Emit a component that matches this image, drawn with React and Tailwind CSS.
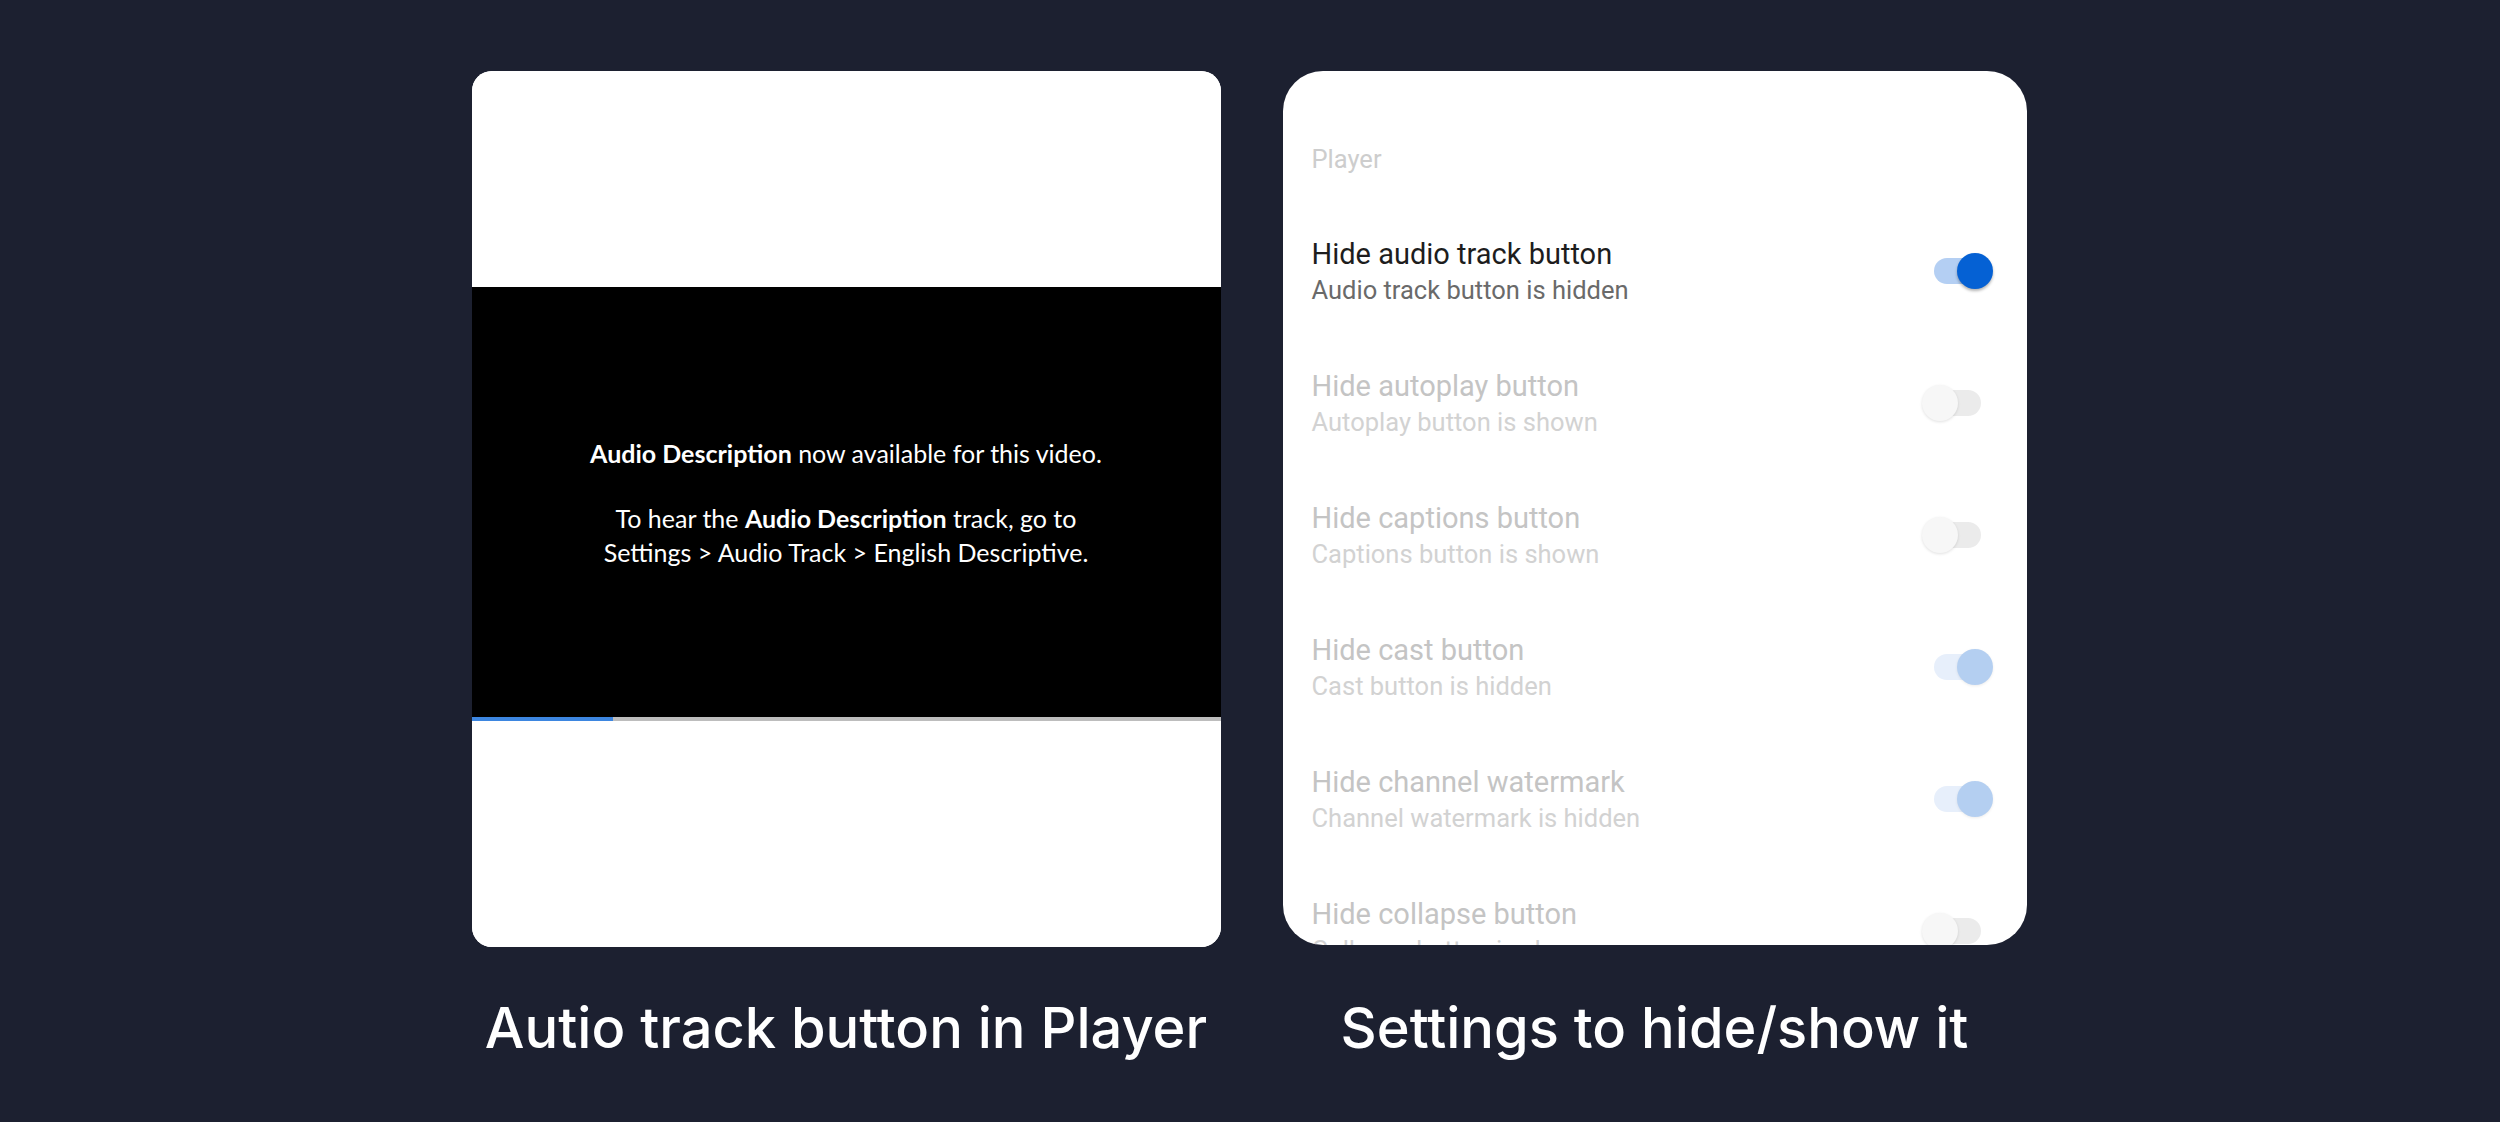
import React from "react";

const settings = [
  { title: "Hide audio track button", sub: "Audio track button is hidden", on: true, enabled: true },
  { title: "Hide autoplay button", sub: "Autoplay button is shown", on: false, enabled: false },
  { title: "Hide captions button", sub: "Captions button is shown", on: false, enabled: false },
  { title: "Hide cast button", sub: "Cast button is hidden", on: true, enabled: false },
  { title: "Hide channel watermark", sub: "Channel watermark is hidden", on: true, enabled: false },
  { title: "Hide collapse button", sub: "Collapse button is shown", on: false, enabled: false },
];

const Toggle = ({ on, enabled }) => {
  // track + thumb, Android style
  let track = "bg-[#ebebeb]";
  let thumb = "bg-[#f7f7f7] shadow-[0_1px_3px_rgba(0,0,0,0.12)] left-0";
  if (on && enabled) {
    track = "bg-[#b4cff3]";
    thumb = "bg-[#0561d4] shadow-[0_2px_3px_rgba(0,0,0,0.3)] right-0";
  } else if (on) {
    track = "bg-[#e7effb]";
    thumb = "bg-[#b4cff1] shadow-[0_1px_3px_rgba(0,0,0,0.08)] right-0";
  }
  return (
    <div className="relative w-[71px] h-[36px] shrink-0">
      <div className={`absolute left-[12px] right-[12px] top-[5px] h-[26px] rounded-full ${track}`} />
      <div className={`absolute top-0 w-[36px] h-[36px] rounded-full ${thumb}`} />
    </div>
  );
};

export default function App() {
  return (
    <div className="w-[2500px] h-[1122px] bg-[#1c2030] flex justify-center pt-[71px] font-['Inter',sans-serif]">
      <div className="flex gap-[62px] -ml-[2px]">
        {/* ---------- PLAYER ---------- */}
        <div className="w-[749px] flex flex-col items-center">
          <div className="w-full h-[876px] bg-white rounded-[20px] overflow-hidden flex flex-col">
            <div className="h-[216px] bg-white" />
            <div className="h-[430px] bg-black flex flex-col items-center justify-center text-white text-[25px] leading-[34px] text-center font-['Lato',sans-serif]">
              <p>
                <span className="font-bold">Audio Description</span> now available for this video.
              </p>
              <p className="mt-[31px]">
                To hear the <span className="font-bold">Audio Description</span> track, go to
              </p>
              <p>Settings &gt; Audio Track &gt; English Descriptive.</p>
            </div>
            <div className="h-[4px] bg-[#bdbdbd] flex">
              <div className="w-[141px] bg-[#3d86e0]" />
            </div>
            <div className="flex-1 bg-white" />
          </div>
          <p className="mt-[50px] text-white text-[56px] leading-[62px] font-medium">
            Autio track button in Player
          </p>
        </div>

        {/* ---------- SETTINGS ---------- */}
        <div className="w-[744px] flex flex-col items-center">
          <div className="w-full h-[874px] bg-white rounded-[40px] overflow-hidden pt-[74px] pl-[29px] pr-[34px] font-['Roboto',sans-serif]">
            <div className="flex flex-col gap-[64px]">
              <p className="text-[25.5px] leading-[28px] text-[#cdcdcd]">Player</p>
              {settings.map((s) => (
                <div key={s.title} className="flex items-center justify-between">
                  <div>
                    <p className={`text-[29px] leading-[34px] ${s.enabled ? "text-[#1d1d1d]" : "text-[#c4c4c4]"}`}>
                      {s.title}
                    </p>
                    <p className={`mt-[4px] text-[25.5px] leading-[30px] ${s.enabled ? "text-[#6a6a6a]" : "text-[#d2d2d2]"}`}>
                      {s.sub}
                    </p>
                  </div>
                  <Toggle on={s.on} enabled={s.enabled} />
                </div>
              ))}
            </div>
          </div>
          <p className="mt-[52px] text-white text-[56px] leading-[62px] font-medium">
            Settings to hide/show it
          </p>
        </div>
      </div>
    </div>
  );
}
